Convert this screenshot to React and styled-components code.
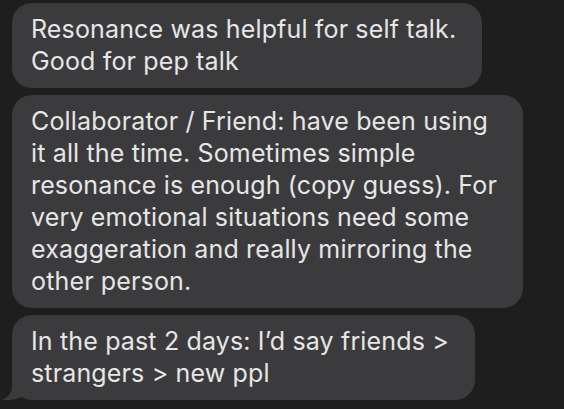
import styled, { createGlobalStyle } from "styled-components"

const GlobalStyle = createGlobalStyle`
  html, body {
    margin: 0;
    padding: 0;
    background: #1e1e1e;
  }
`

const messages = [
  { lines: ["Resonance was helpful for self talk.", "Good for pep talk"] },
  {
    lines: [
      "Collaborator / Friend: have been using",
      "it all the time. Sometimes simple",
      "resonance is enough (copy guess). For",
      "very emotional situations need some",
      "exaggeration and really mirroring the",
      "other person.",
    ],
  },
  { lines: ["In the past 2 days: I’d say friends >", "strangers > new ppl"], tail: true },
]

function Tail() {
  return (
    <TailShape width="30" height="20" viewBox="0 0 30 20">
      <path
        d="M10 0 L10 6 C10 13 6 17.5 0 20 C7 20.6 15 19.4 20 16.6 C23 19 26 20 30 20 L30 0 Z"
        fill="#3b3b3d"
      />
    </TailShape>
  )
}

function App() {
  return (
    <>
      <GlobalStyle />
      <Thread>
        {messages.map((m, i) => (
          <Bubble key={i}>
            {m.lines.map((l, j) => (
              <Line key={j}>{l}</Line>
            ))}
            {m.tail && <Tail />}
          </Bubble>
        ))}
      </Thread>
    </>
  )
}

export default App

const Thread = styled.div`
  width: 564px;
  height: 409px;
  box-sizing: border-box;
  padding: 3px 0 0 12px;
  display: flex;
  flex-direction: column;
  align-items: flex-start;
  gap: 7px;
  overflow: hidden;
  font-family: Inter, "Noto Sans", sans-serif;
`

const Bubble = styled.div`
  position: relative;
  background: #3b3b3d;
  color: #e6e6e6;
  border-radius: 20px;
  padding: 10px 26px 11px 19px;
  font-size: 25px;
  letter-spacing: 0.15px;
  line-height: 32px;
`

const Line = styled.div`
  white-space: nowrap;
`

const TailShape = styled.svg`
  position: absolute;
  left: -10px;
  bottom: 0;
  display: block;
`
